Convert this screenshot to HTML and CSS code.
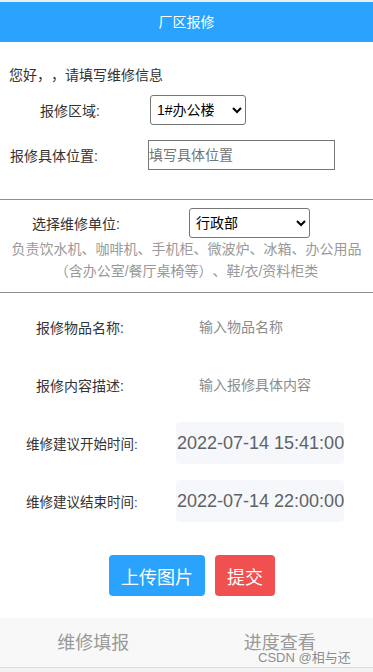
FILE: index.html
```html
<!DOCTYPE html>
<html lang="zh-CN">
<head>
    <meta charset="UTF-8">
    <meta name="viewport" content="width=device-width, initial-scale=1.0">
    <title>厂区报修</title>
    <link rel="stylesheet" href="styles.css">
</head>
<body>
    <header class="header">厂区报修</header>

    <section class="block block-top">
        <p class="greeting">您好，，请填写维修信息</p>
        <div class="row row-area">
            <span class="label label-area">报修区域:</span>
            <select class="select select-area">
                <option>1#办公楼</option>
            </select>
        </div>
        <div class="row row-place">
            <span class="label label-place">报修具体位置:</span>
            <input class="text-input" type="text" placeholder="填写具体位置">
        </div>
    </section>

    <section class="block block-unit">
        <div class="row row-unit">
            <span class="label label-unit">选择维修单位:</span>
            <select class="select select-unit">
                <option>行政部</option>
            </select>
        </div>
        <p class="unit-desc">负责饮水机、咖啡机、手机柜、微波炉、冰箱、办公用品<br>（含办公室/餐厅桌椅等）、鞋/衣/资料柜类</p>
    </section>

    <section class="block block-detail">
        <div class="row row-item">
            <span class="label label-item">报修物品名称:</span>
            <input class="plain-input" type="text" placeholder="输入物品名称">
        </div>
        <div class="row row-desc">
            <span class="label label-item">报修内容描述:</span>
            <input class="plain-input" type="text" placeholder="输入报修具体内容">
        </div>
        <div class="row row-time">
            <span class="label label-time">维修建议开始时间:</span>
            <div class="date-box">2022-07-14 15:41:00</div>
        </div>
        <div class="row row-time row-time-end">
            <span class="label label-time">维修建议结束时间:</span>
            <div class="date-box">2022-07-14 22:00:00</div>
        </div>
        <div class="actions">
            <button class="btn btn-upload">上传图片</button>
            <button class="btn btn-submit">提交</button>
        </div>
    </section>

    <nav class="tabbar">
        <a class="tab">维修填报</a>
        <a class="tab">进度查看</a>
    </nav>

    <div class="watermark">CSDN @相与还</div>
</body>
</html>
```

FILE: styles.css
```css
* {
    margin: 0;
    padding: 0;
    box-sizing: border-box;
}

body {
    font-family: 'Liberation Sans', 'Noto Sans CJK SC', sans-serif;
    font-size: 14px;
    color: #333;
    background: #f2f2f2;
    width: 373px;
    height: 672px;
    overflow: hidden;
    position: relative;
    text-spacing-trim: space-all;
}

/* Header */
.header {
    border-top: 2px solid #eeeeee;
    height: 42px;
    line-height: 40px;
    background: #29a3fe;
    color: #fff;
    text-align: center;
    font-size: 14px;
}

.block {
    background: #fff;
}

.block-top {
    padding-top: 23px;
    height: 158px;
    border-bottom: 1px solid #8e8e8e;
}

.greeting {
    padding-left: 9px;
    line-height: 20px;
    color: #333;
}

.row {
    display: flex;
    align-items: center;
    height: 30px;
}

.label {
    color: #333;
    white-space: nowrap;
}

.row-area {
    margin-top: 10px;
}

.label-area {
    padding-left: 40px;
    width: 150px;
}

.row-place {
    margin-top: 15px;
}

.label-place {
    padding-left: 10px;
    width: 148px;
}

.select {
    height: 30px;
    font-family: inherit;
    font-size: 14px;
    color: #000;
    border: 1px solid #767676;
    border-radius: 3px;
    background: #fff;
    padding-left: 2px;
}

.select-area {
    width: 96px;
}

.text-input {
    width: 187px;
    height: 30px;
    border: 1px solid #767676;
    font-family: inherit;
    font-size: 14px;
    padding: 0;
    outline: none;
}

.text-input::placeholder {
    color: #757575;
}

/* Unit block */
.block-unit {
    padding-top: 8px;
    height: 93px;
    border-bottom: 1px solid #8e8e8e;
}

.label-unit {
    padding-left: 32px;
    width: 189px;
}

.select-unit {
    width: 121px;
}

.unit-desc {
    text-align: center;
    color: #999;
    line-height: 22px;
}

/* Detail block */
.block-detail {
    padding-top: 19px;
    height: 325px;
}

.label-item {
    padding-left: 36px;
    width: 199px;
}

.plain-input {
    border: none;
    outline: none;
    font-family: inherit;
    font-size: 14px;
    width: 160px;
    padding: 0;
    background: transparent;
}

.plain-input::placeholder {
    color: #8c8c8c;
}

.row-desc {
    margin-top: 28px;
}

.row-time {
    margin-top: 22px;
    height: 42px;
}

.row-time-end {
    margin-top: 16px;
}

.label-time {
    padding-left: 26px;
    width: 176px;
    font-size: 13.5px;
}

.date-box {
    width: 168px;
    height: 42px;
    line-height: 42px;
    background: #f5f7fa;
    border-radius: 4px;
    color: #606266;
    font-size: 18px;
    padding-left: 1px;
    white-space: nowrap;
    font-family: 'Liberation Sans', sans-serif;
}

/* Buttons */
.actions {
    display: flex;
    gap: 10px;
    padding-left: 109px;
    margin-top: 33px;
}

.btn {
    height: 41px;
    border: none;
    border-radius: 4px;
    color: #fff;
    font-family: inherit;
    font-size: 18px;
}

.btn-upload {
    width: 96px;
    background: #29a3fe;
}

.btn-submit {
    width: 60px;
    background: #f05050;
}

/* Tab bar */
.tabbar {
    display: flex;
    height: 50px;
    background: #f8f8f8;
    border-bottom: 1px solid #dddddd;
}

.tab {
    flex: 1;
    text-align: center;
    line-height: 50px;
    font-size: 18px;
    color: #999;
}

.watermark {
    position: absolute;
    left: 258px;
    top: 647px;
    font-size: 13px;
    color: #8c8c8c;
    text-shadow: 0 0 2px #fff;
}
```
